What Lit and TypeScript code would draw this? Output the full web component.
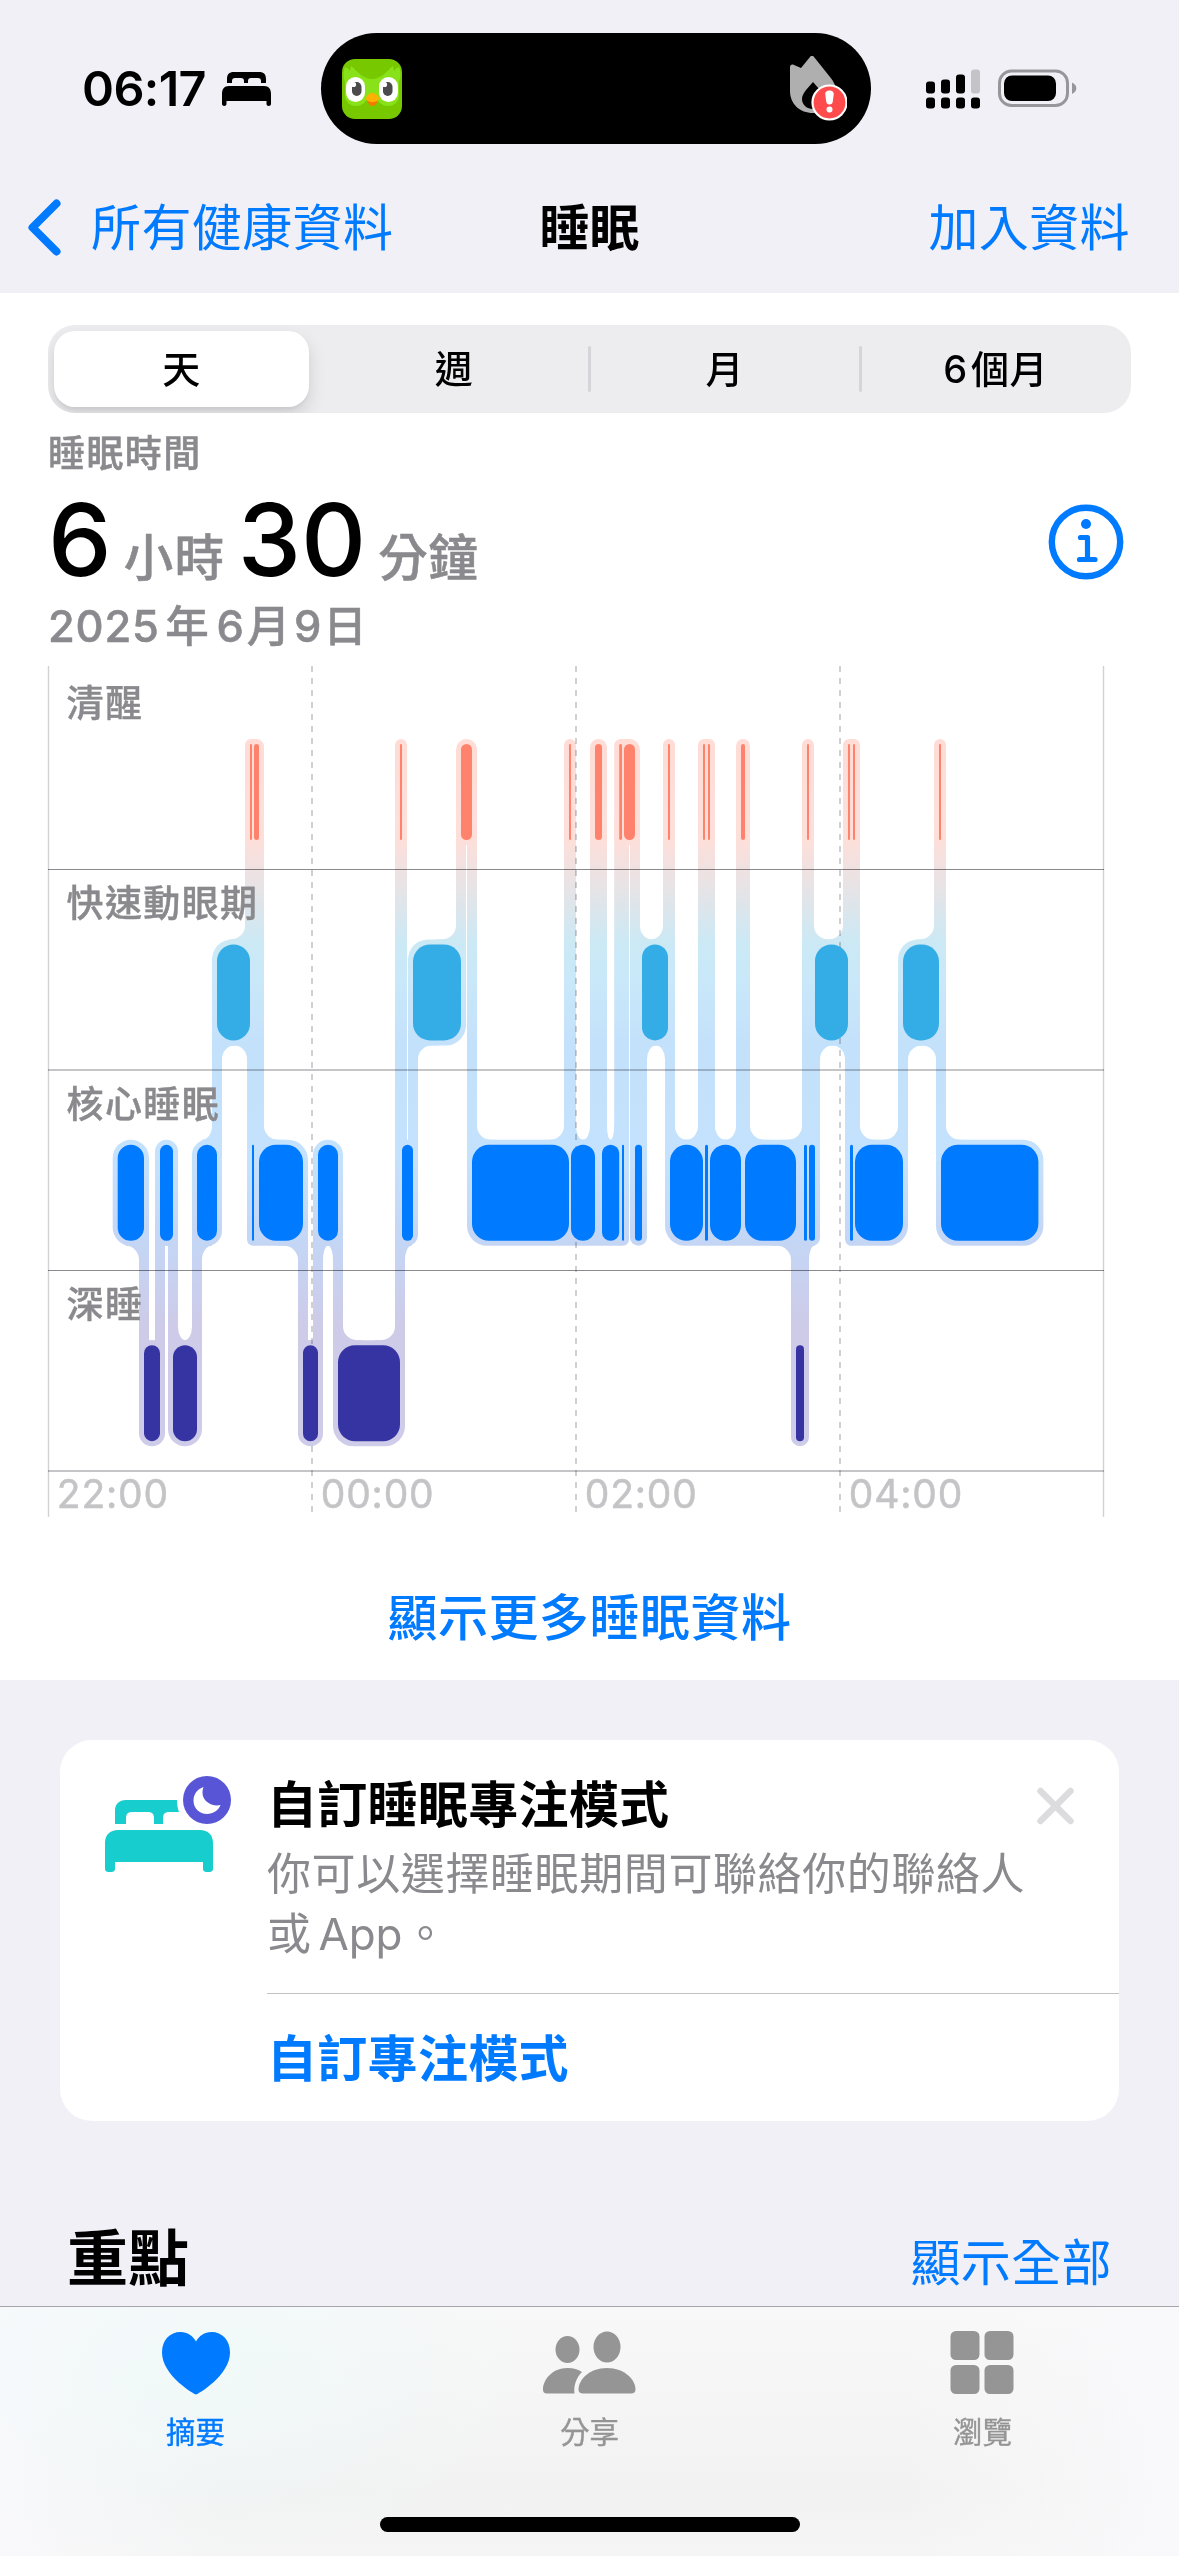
import { LitElement, html, svg, css } from "lit";
import { customElement, property } from "lit/decorators.js";

type Stage = 0 | 1 | 2 | 3;
interface Segment { stage: Stage; from: number; to: number; }
interface Span { a: number; b: number; }

const LANE_TOP = [744, 944.4, 1144.8, 1345.2];
const LANE_H = 96;
const PAD = 5;
const FILLET = 14;
const CORNER = 20;
const STAGE_NAMES = ["清醒", "快速動眼期", "核心睡眠", "深睡"];
const STAGE_CLASS = ["awake", "rem", "core", "deep"];

/* Consecutive stages of the night: [stage, end position]. */
const NIGHT: Array<[Stage, number]> = [
  [2, 144], [3, 160], [2, 173], [3, 197], [2, 217], [1, 250], [0, 252], [2, 254],
  [0, 259], [2, 303], [3, 318], [2, 338], [3, 400], [0, 402], [2, 413], [1, 461],
  [0, 472], [2, 569], [0, 571], [2, 595], [0, 602], [2, 619.2], [0, 622], [2, 624],
  [0, 635], [2, 642], [1, 668], [0, 670], [2, 703], [0, 705], [2, 708], [0, 710],
  [2, 741], [0, 745], [2, 796], [3, 804], [2, 807], [0, 809], [2, 815], [1, 848],
  [0, 850], [2, 853], [0, 855], [2, 903], [1, 939], [0, 941], [2, 1038.4],
];

function buildSegments(): Segment[] {
  let from = 117.7;
  return NIGHT.map(([stage, to]) => {
    const s = { stage, from, to };
    from = to;
    return s;
  });
}

function merge(spans: Span[]): Span[] {
  const out: Span[] = [];
  for (const s of [...spans].sort((p, q) => p.a - q.a)) {
    const last = out[out.length - 1];
    if (last && s.a <= last.b + 0.01) last.b = Math.max(last.b, s.b);
    else out.push({ a: s.a, b: s.b });
  }
  return out;
}

@customElement("sleep-chart")
class SleepChart extends LitElement {
  static styles = css`
    :host { display: block; }
    .plot { display: block; width: 1179px; height: 860px; }
    .edge { stroke: #d2d2d5; stroke-width: 1.4; }
    .tick { stroke: #d0d0d3; stroke-width: 2; stroke-dasharray: 6 6; mix-blend-mode: multiply; }
    .rule { stroke: #8a8a8e; stroke-width: 1; mix-blend-mode: multiply; }
    .soft { stroke: #c5c5c7; stroke-width: 2; mix-blend-mode: multiply; }
    .awake { fill: #ff836c; }
    .rem { fill: #34ade6; }
    .core { fill: #007aff; }
    .deep { fill: #3634a3; }
    .halo { fill: url(#halo); }
    .label {
      font: 500 37px Inter, "Noto Sans CJK TC", sans-serif;
      letter-spacing: 1.4px;
      fill: #8a8a8e;
      stroke: #8a8a8e;
      stroke-width: 0.4;
    }
    .hour {
      font: 400 39px Inter, "Noto Sans CJK TC", sans-serif;
      letter-spacing: 0.8px;
      fill: #c4c4c7;
      stroke: #c4c4c7;
      stroke-width: 0.5;
    }
  `;

  /* Outlines of the soft ribbon: lane pads, vertical links and concave corner joins. */
  private halo(segs: Segment[]): string[] {
    const d: string[] = [];
    const links = segs.slice(1).map((s, i) => {
      const p = segs[i];
      return {
        a: s.from - PAD, b: s.from + PAD,
        hi: Math.min(s.stage, p.stage), lo: Math.max(s.stage, p.stage),
      };
    });
    for (const l of links) {
      const y0 = LANE_TOP[l.hi] + LANE_H - 20;
      const y1 = LANE_TOP[l.lo] + 20;
      d.push(`M${l.a} ${y0}H${l.b}V${y1}H${l.a}Z`);
    }
    for (let lane = 0; lane < 4; lane++) {
      const own = segs.filter((s) => s.stage === lane);
      const top = LANE_TOP[lane] - PAD;
      const bottom = LANE_TOP[lane] + LANE_H + PAD;
      const runs = merge(own.map((s) => ({ a: s.from - PAD, b: s.to + PAD })));
      const above = merge(links.filter((l) => l.hi < lane && l.lo >= lane));
      const below = merge(links.filter((l) => l.hi <= lane && l.lo > lane));
      for (const r of runs) {
        const first = own.find((s) => s.from - PAD >= r.a - 0.01)!;
        const last = own.filter((s) => s.to + PAD <= r.b + 0.01).pop()!;
        const rl = Math.min(CORNER, (first.to - first.from) / 2 + PAD);
        const rr = Math.min(CORNER, (last.to - last.from) / 2 + PAD);
        d.push(
          `M${r.a + rl} ${top}H${r.b - rr}A${rr} ${rr} 0 0 1 ${r.b} ${top + rr}V${bottom - rr}` +
          `A${rr} ${rr} 0 0 1 ${r.b - rr} ${bottom}H${r.a + rl}A${rl} ${rl} 0 0 1 ${r.a} ${bottom - rl}` +
          `V${top + rl}A${rl} ${rl} 0 0 1 ${r.a + rl} ${top}Z`,
        );
        for (const [strips, y, dir] of [[above, top, -1], [below, bottom, 1]] as Array<[Span[], number, number]>) {
          const hit = strips.filter((s) => s.b > r.a && s.a < r.b);
          if (!hit.length) continue;
          let cursor = r.a;
          let joined = false;
          const gaps: Array<Span & { l: boolean; r: boolean }> = [];
          for (const s of hit) {
            if (s.a > cursor) gaps.push({ a: cursor, b: s.a, l: joined, r: true });
            cursor = s.b;
            joined = true;
          }
          if (cursor < r.b) gaps.push({ a: cursor, b: r.b, l: true, r: false });
          for (const g of gaps) {
            const w = g.b - g.a;
            const base = y - dir * CORNER;
            const fill = Math.min(CORNER, w / 2);
            if (g.l) d.push(`M${g.a - 1} ${y}H${g.a + fill}V${base}H${g.a - 1}Z`);
            if (g.r) d.push(`M${g.b + 1} ${y}H${g.b - fill}V${base}H${g.b + 1}Z`);
            if (w < 7) continue;
            const rx = Math.min(FILLET, w / 2);
            const y1 = y + dir * FILLET;
            const up = dir < 0;
            if (g.l) {
              d.push(`M${g.a - 1} ${y - dir}V${y1}H${g.a}A${rx} ${FILLET} 0 0 ${up ? 0 : 1} ${g.a + rx} ${y}V${y - dir}Z`);
            }
            if (g.r) {
              d.push(`M${g.b + 1} ${y - dir}V${y1}H${g.b}A${rx} ${FILLET} 0 0 ${up ? 1 : 0} ${g.b - rx} ${y}V${y - dir}Z`);
            }
          }
        }
      }
    }
    return d;
  }

  render() {
    const segs = buildSegments();
    return html`
      <svg class="plot" viewBox="0 660 1179 860">
        <defs>
          <linearGradient id="halo" gradientUnits="userSpaceOnUse" x1="0" y1="739" x2="0" y2="1446">
            <stop offset="0" stop-color="#ffdcd6" />
            <stop offset="0.145" stop-color="#fddfda" />
            <stop offset="0.29" stop-color="#cbe9f5" />
            <stop offset="0.34" stop-color="#c9e8f9" />
            <stop offset="0.43" stop-color="#c4e1fb" />
            <stop offset="0.59" stop-color="#c4e2fd" />
            <stop offset="0.71" stop-color="#c4d6f5" />
            <stop offset="0.83" stop-color="#cdcbe8" />
            <stop offset="1" stop-color="#cfcce9" />
          </linearGradient>
        </defs>
        ${this.halo(segs).map((d) => svg`<path class="halo" d=${d} />`)}
        <line class="edge" x1="48.5" x2="48.5" y1="666" y2="1517" />
        <line class="edge" x1="1103.5" x2="1103.5" y1="666" y2="1517" />
        ${[312, 576, 840].map((x) => svg`<line class="tick" x1=${x} x2=${x} y1="666" y2="1517" />`)}
        <line class="rule" x1="48" x2="1104" y1="869.5" y2="869.5" />
        <line class="soft" x1="48" x2="1104" y1="1070" y2="1070" />
        <line class="rule" x1="48" x2="1104" y1="1270.5" y2="1270.5" />
        <line class="soft" x1="48" x2="1104" y1="1471" y2="1471" />
        ${segs.map((s) => {
          const w = s.to - s.from;
          const r = Math.min(17, w / 2);
          return svg`<rect class=${STAGE_CLASS[s.stage]} x=${s.from} y=${LANE_TOP[s.stage]}
            width=${w} height=${LANE_H} rx=${r} ry=${r} />`;
        })}
        ${STAGE_NAMES.map((n, i) => svg`<text class="label" x="66.5" y=${716.5 + i * 200.5}>${n}</text>`)}
        ${["22:00", "00:00", "02:00", "04:00"].map((t, i) => svg`<text class="hour" x=${56.8 + i * 264} y="1508.3">${t}</text>`)}
      </svg>
    `;
  }
}

const duo = html`
  <svg class="duo" viewBox="0 0 60 60">
    <rect width="60" height="60" rx="13" fill="#78c800" />
    <path d="M3 8c3 1 4 3 5 4l1-5c3 2 6 6 10 9 3 2 7 4 11 4s8-2 11-4c4-3 7-7 10-9l1 5c1-1 2-3 5-4 2 5 2 10 0 15v13c0 7-5 11-11 11-5 0-9-3-11-7H25c-2 4-6 7-11 7-6 0-11-4-11-11V23C1 18 1 13 3 8z" fill="#89e219" />
    <rect x="4" y="18" width="19" height="25" rx="9.5" fill="#fff" />
    <rect x="37" y="18" width="19" height="25" rx="9.5" fill="#fff" />
    <rect x="10" y="23" width="9.5" height="14" rx="4.7" fill="#4b4b4b" />
    <rect x="41" y="23" width="9.5" height="14" rx="4.7" fill="#4b4b4b" />
    <circle cx="11.5" cy="25.5" r="2.6" fill="#fff" />
    <circle cx="42.5" cy="25.5" r="2.6" fill="#fff" />
    <path d="M25 41c1 4 3 6 5.5 6s4.5-2 5.5-6z" fill="#f07d00" />
    <path d="M24 40c0-3 3-6 6.500-6s6.500 3 6.500 6c0 1-3 3-6.500 3S24 41 24 40z" fill="#ffb100" />
  </svg>`;

const flame = html`
  <svg class="flame" viewBox="0 0 60 68">
    <path d="M3 11c0-2 2-3 4-2l7 3 9-11c1-1.500 3-1.500 4 0l16 20c4 5 6 9 6 14 0 13-10 22-23 22S3 48 3 35z" fill="#afafaf" />
    <path d="M26 26l-7 8c-3 4-4 6-4 9 0 6 5 10 11 10s11-4 11-10c0-3-1-5-4-9z" fill="#000" />
    <circle cx="42.5" cy="46.5" r="17" fill="#ff4b4b" stroke="#fff" stroke-width="2.2" />
    <path d="M38.300 38.500c-.2-3 1.700-4 4.200-4s4.400 1 4.200 4l-.9 7c-.2 2-1.300 3-3.300 3s-3.100-1-3.300-3z" fill="#fff" />
    <circle cx="42.5" cy="53.5" r="3" fill="#fff" />
  </svg>`;

@customElement("app-root")
class AppRoot extends LitElement {
  @property() period = "天";

  static styles = css`
    :host {
      display: block;
      width: 1179px;
      height: 2556px;
      overflow: hidden;
      background: #f1f0f6;
      color: #000;
      font-family: Inter, "Noto Sans CJK TC", sans-serif;
    }
    .screen { display: flex; flex-direction: column; height: 2556px; }
    svg { display: block; flex: none; }

    .status { display: flex; height: 178px; }
    .left { display: flex; width: 321px; height: 111px; margin-top: 33px; align-items: center; }
    .clock {
      width: 124px; margin-left: 82px; font-size: 48.5px; font-weight: 600;
      line-height: 60px; letter-spacing: -0.6px; white-space: nowrap;
    }
    .bed { width: 49px; height: 34px; margin-left: 16px; }
    .island {
      display: flex; justify-content: space-between; align-items: center; box-sizing: border-box;
      width: 550px; height: 111px; margin-top: 33.4px; padding: 0 20px 0 21px;
      border-radius: 56px; background: #000;
    }
    .duo { width: 60px; height: 60px; }
    .flame { width: 60px; height: 68px; margin: 3px 4px 0 0; }
    .right { display: flex; height: 111px; margin: 33px 0 0 55px; align-items: center; gap: 18px; }
    .signal { width: 54px; height: 40px; }
    .battery { width: 80px; height: 40px; }

    .nav {
      display: grid; grid-template-columns: 1fr auto 1fr; align-items: center;
      height: 99px; margin-bottom: 16px; padding: 0 26px; font-size: 50px; line-height: 60px;
    }
    .link { color: #007aff; letter-spacing: 0.4px; }
    .back { display: flex; align-items: center; gap: 28px; }
    .chevron { width: 37px; height: 60px; }
    .title { font-weight: 600; }
    .add { justify-self: end; margin-right: 23px; }

    .sheet { display: flex; flex-direction: column; height: 1387px; background: #fff; }
    .segments {
      display: grid; grid-template-columns: repeat(4, 1fr); box-sizing: border-box;
      height: 88px; margin: 32px 48px 0; border-radius: 27px; background: #ededef; overflow: hidden;
    }
    .segment {
      display: flex; align-items: center; justify-content: center; position: relative;
      font-size: 38px; font-weight: 500; line-height: 50px; letter-spacing: 0.5px;
    }
    .segment.split::before {
      content: ""; position: absolute; left: -1.5px; top: 21px;
      width: 3px; height: 46px; border-radius: 2px; background: #d5d5d9;
    }
    .segment.on {
      margin: 6px 9.5px 6px 6px; border-radius: 21px; background: #fff;
      box-shadow: 0 8px 18px rgba(0, 0, 0, 0.13), 0 3px 3px rgba(0, 0, 0, 0.04);
    }
    .digit { margin-right: 3.5px; }

    .summary { display: flex; justify-content: space-between; height: 247px; padding: 0 54px 0 48px; }
    .caption {
      margin-top: 18px; font-size: 37px; font-weight: 500; line-height: 46px; letter-spacing: 1.4px;
      color: #8a8a8e; -webkit-text-stroke: 0.5px #8a8a8e;
    }
    .total { display: flex; align-items: baseline; height: 100px; margin-top: 12px; }
    .num { font-size: 101px; font-weight: 540; line-height: 100px; }
    .unit {
      font-size: 49.5px; font-weight: 500; line-height: 60px; letter-spacing: 1.5px;
      color: #8a8a8e; -webkit-text-stroke: 0.5px #8a8a8e;
    }
    .hours { margin: 0 12px 0 12px; }
    .minutes { margin-left: 12px; letter-spacing: 0.5px; }
    .date {
      display: flex; margin-top: 12px; font-size: 43.5px; font-weight: 500; line-height: 50px;
      letter-spacing: 0.8px; color: #8a8a8e; white-space: nowrap; -webkit-text-stroke: 0.5px #8a8a8e;
    }
    .year { margin: 0 7px 0 5.5px; }
    .month { margin: 0 3px 0 2px; }
    .day { margin-left: 1px; }
    .info { width: 78px; height: 78px; margin-top: 90px; }

    .more {
      display: flex; justify-content: center; margin-top: 68px; font-size: 50px; font-weight: 500;
      line-height: 60px; letter-spacing: 0.5px; color: #007aff;
    }

    .card {
      display: flex; height: 381px; margin: 60px 60px 0; border-radius: 32px; background: #fff;
    }
    .art { width: 130px; height: 100px; margin: 32px 34px 0 43px; }
    .body { flex: 1; display: flex; flex-direction: column; }
    .top { height: 253px; }
    .heading { padding-top: 35px; font-size: 50px; font-weight: 600; line-height: 60px; letter-spacing: 0.3px; }
    .text { margin-top: 9px; font-size: 44px; line-height: 60px; letter-spacing: 0.6px; color: #8a8a8e; white-space: nowrap; }
    .app { margin: 0 1px 0 7px; letter-spacing: -0.2px; }
    .close { width: 40px; height: 40px; margin: 46px 43px 0 -83px; }
    .action {
      display: flex; align-items: center; flex: 1; border-top: 1px solid #c2c2c5; padding-top: 2px;
      font-size: 50px; font-weight: 600; line-height: 60px; letter-spacing: 0.3px; color: #007aff;
    }

    .section {
      display: flex; justify-content: space-between; align-items: flex-start;
      box-sizing: border-box; height: 185px; padding: 98px 67px 0 67px;
    }
    .big { font-size: 61px; font-weight: 700; line-height: 80px; }
    .all { margin-top: 14px; font-size: 50px; line-height: 60px; }

    .tabs {
      display: flex; flex-direction: column; align-items: center; flex: 1;
      border-top: 1px solid #a5a5aa;
      background:
        radial-gradient(ellipse 320px 190px at 200px 60px, rgba(238, 250, 250, 0.7), rgba(238, 250, 250, 0)),
        linear-gradient(90deg, #f9f9fb 0, rgba(249, 249, 251, 0) 220px, rgba(249, 249, 251, 0) 900px, #f9f9fb 100%),
        linear-gradient(#f8f8f8, #f2f2f2 75%, #f5f5f5);
    }
    .row { display: grid; grid-template-columns: repeat(3, 1fr); width: 100%; height: 210px; }
    .tab {
      display: flex; flex-direction: column; align-items: center; gap: 14px; padding-top: 20px;
      font-size: 29.5px; font-weight: 400; line-height: 38px; color: #959595;
      -webkit-text-stroke: 0.4px currentColor;
    }
    .tab.on { padding-right: 2px; color: #007aff; }
    .glyph { width: 96px; height: 72px; }
    .home { width: 420px; height: 15px; border-radius: 8px; background: #000; }
  `;

  render() {
    const periods = ["天", "週", "月", "6個月"];
    return html`
      <div class="screen">
        <div class="status">
          <div class="left">
            <span class="clock">06:17</span>
            <svg class="bed" viewBox="0 0 49 34">
              <path d="M5 11V7c0-4.500 2-7 7-7h25c5 0 7 2.500 7 7v4h-5V9c0-2-1-3-3-3h-7c-2 0-3 1-3 3v2h-4V9c0-2-1-3-3-3h-6c-2 0-3 1-3 3v2z" />
              <path d="M0 22c0-5 2-8 7-8h35c5 0 7 3 7 8v10c0 1.300-1 2-2.300 2S44.500 33 44.500 32v-3h-40v3c0 1-1 2-2.200 2S0 33 0 32z" />
            </svg>
          </div>
          <div class="island">${duo}${flame}</div>
          <div class="right">
            <svg class="signal" viewBox="0 0 54 40">
              <rect x="0" y="12.5" width="9" height="12" rx="3" />
              <rect x="15" y="10.5" width="9" height="14" rx="3" />
              <rect x="30" y="5.5" width="9" height="19" rx="3" />
              <rect x="45" y="0.5" width="9" height="24" rx="3" fill="#c3c3c8" />
              ${[0, 15, 30, 45].map((x) => svg`<rect x=${x} y="28.5" width="9" height="11" rx="3" />`)}
            </svg>
            <svg class="battery" viewBox="0 0 80 40">
              <rect x="1.5" y="2" width="68" height="34.5" rx="12" fill="none" stroke="#97979b" stroke-width="3" />
              <rect x="6" y="6.5" width="52" height="25.5" rx="8" />
              <path d="M74 13.500c3 1.500 4.300 3.500 4.300 5.700S77 23.500 74 25z" fill="#97979b" />
            </svg>
          </div>
        </div>

        <div class="nav">
          <div class="back link">
            <svg class="chevron" viewBox="0 0 37 60">
              <path d="M30.500 5.500L6.500 29.500l24 24" fill="none" stroke="#007aff" stroke-width="8" stroke-linecap="round" stroke-linejoin="round" />
            </svg>
            <span>所有健康資料</span>
          </div>
          <span class="title">睡眠</span>
          <span class="add link">加入資料</span>
        </div>

        <div class="sheet">
          <div class="segments">
            ${periods.map((p, i) => html`
              <div class="segment ${p === this.period ? "on" : ""} ${i > 1 ? "split" : ""}">
                ${p.length > 1 ? html`<span class="digit">${p[0]}</span><span>${p.slice(1)}</span>` : p}
              </div>`)}
          </div>
          <div class="summary">
            <div>
              <div class="caption">睡眠時間</div>
              <div class="total">
                <span class="num">6</span><span class="unit hours">小時</span>
                <span class="num">30</span><span class="unit minutes">分鐘</span>
              </div>
              <div class="date">2025<span class="year">年</span>6<span class="month">月</span>9<span class="day">日</span></div>
            </div>
            <svg class="info" viewBox="0 0 78 78" fill="none" stroke="#007aff" stroke-linecap="round" stroke-linejoin="round">
              <circle cx="39" cy="39" r="34.2" stroke-width="6.4" />
              <circle cx="39" cy="21" r="5" fill="#007aff" stroke="none" />
              <path d="M33.500 34.500H40.500V56.500M32.500 56.500H48" stroke-width="5.2" />
            </svg>
          </div>
          <sleep-chart></sleep-chart>
          <div class="more">顯示更多睡眠資料</div>
        </div>

        <div class="card">
          <svg class="art" viewBox="103 1772 130 100">
            <path d="M115 1824v-13c0-7 4-11 11-11h51c0 4 .5 8 2 12h-10c-4 0-6 2-6 6v6h-9v-6c0-4-2-6-6-6h-16c-4 0-6 2-6 6v6z" fill="#17cdce" />
            <path d="M105 1843c0-8 5-13 13-13h82c8 0 13 5 13 13v26c0 2-1.500 3-3.500 3h-3c-2 0-3.500-1-3.500-3v-7h-88v7c0 2-1.500 3-3.500 3h-3c-2 0-3.500-1-3.500-3z" fill="#17cdce" />
            <circle cx="207" cy="1800" r="24" fill="#5856d6" />
            <path d="M203.500 1787c-6 2-10 7-10 13.500 0 8 6 13.500 13.500 13.500 6 0 11.500-3.500 13.500-9-9 2-18-4-18-12 0-2.500.3-4 1-6z" fill="#fff" />
          </svg>
          <div class="body">
            <div class="top">
              <div class="heading">自訂睡眠專注模式</div>
              <div class="text">你可以選擇睡眠期間可聯絡你的聯絡人<br />或<span class="app">App</span>。</div>
            </div>
            <div class="action">自訂專注模式</div>
          </div>
          <svg class="close" viewBox="0 0 40 40">
            <path d="M4.500 5l30 30M34.500 5l-30 30" fill="none" stroke="#dcdcde" stroke-width="6.5" stroke-linecap="round" />
          </svg>
        </div>

        <div class="section">
          <span class="big">重點</span>
          <span class="all link">顯示全部</span>
        </div>

        <div class="tabs">
          <div class="row">
            <div class="tab on">
              <svg class="glyph" viewBox="0 0 96 72">
                <path d="M48 67.500c-1.500 0-34-19-34-42C14 13 22 5 32.500 5 39.500 5 45 9 48 14.500 51 9 56.500 5 63.500 5 74 5 82 13 82 25.500c0 23-32.500 42-34 42z" fill="#007aff" />
              </svg>
              <span>摘要</span>
            </div>
            <div class="tab">
              <svg class="glyph" viewBox="0 0 96 72" fill="#959595">
                <ellipse cx="25.5" cy="22.5" rx="12" ry="13.5" />
                <ellipse cx="65" cy="20" rx="13.5" ry="15.5" />
                <path d="M5 66.500c-3 0-4-1.500-4-4C1 53 10 41 25.500 41c6 0 10.500 1.500 14.500 4-6 6-8.500 14-7.500 21.500z" />
                <path d="M41 66.500c-3 0-4.500-1.500-4.500-4C36.500 53 47 41 65 41s28.500 12 28.500 21.500c0 2.500-1.500 4-4.500 4z" />
              </svg>
              <span>分享</span>
            </div>
            <div class="tab">
              <svg class="glyph" viewBox="0 0 96 72" fill="#959595">
                <rect x="15.5" y="4" width="29" height="29" rx="5.5" />
                <rect x="49.5" y="4" width="29" height="29" rx="5.5" />
                <rect x="15.5" y="38" width="29" height="29" rx="5.5" />
                <rect x="49.5" y="38" width="29" height="29" rx="5.5" />
              </svg>
              <span>瀏覽</span>
            </div>
          </div>
          <div class="home"></div>
        </div>
      </div>
    `;
  }
}
